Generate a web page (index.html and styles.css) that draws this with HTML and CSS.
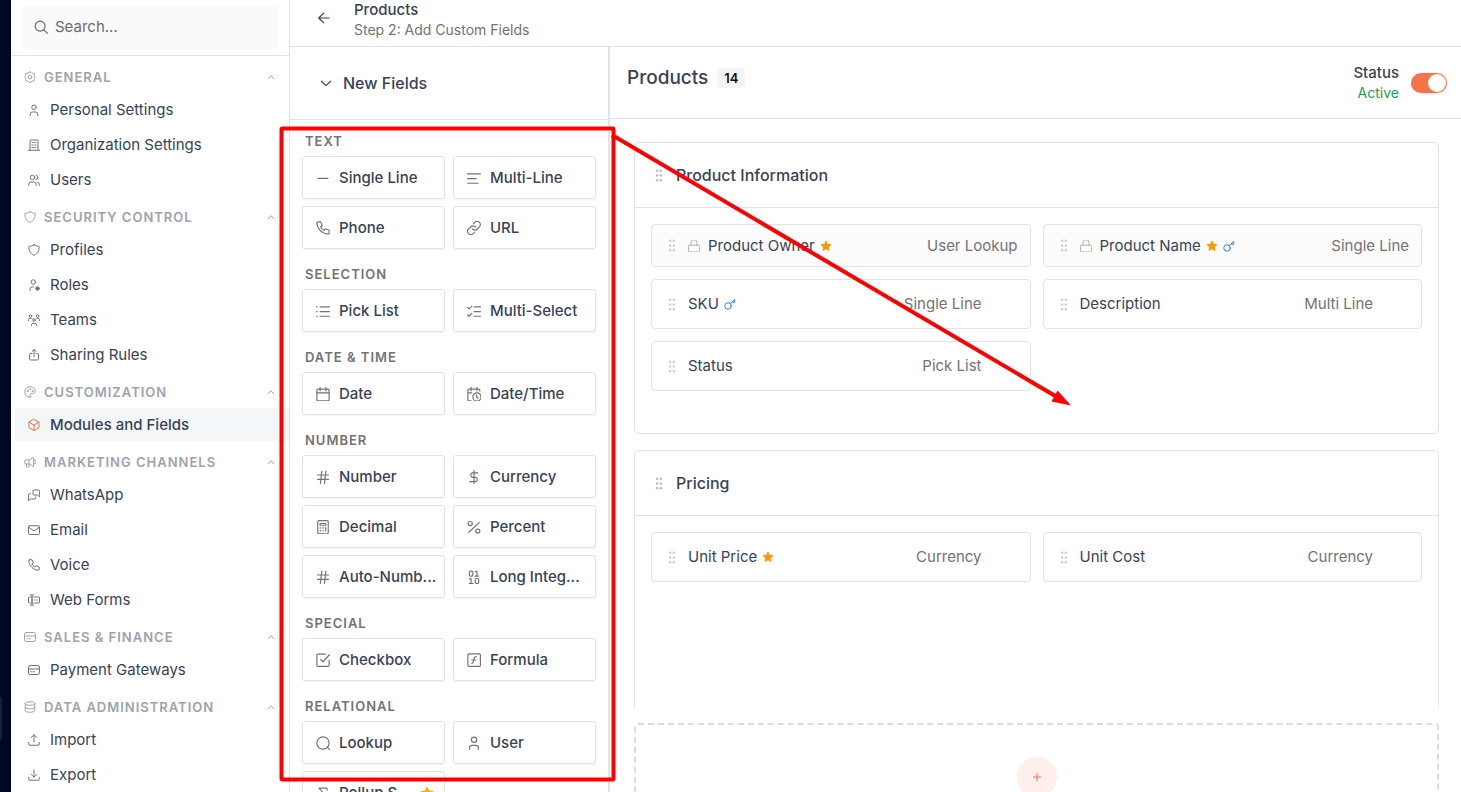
FILE: index.html
```html
<!DOCTYPE html>
<html lang="en">
<head>
<meta charset="utf-8">
<meta name="viewport" content="width=device-width, initial-scale=1">
<title>Products - Add Custom Fields</title>
<link rel="stylesheet" href="styles.css">
</head>
<body>
<svg class="sprite" aria-hidden="true">
  <symbol id="search" viewBox="0 0 24 24"><circle cx="10.5" cy="10.5" r="8.500"/><path d="M16.800 16.800 23 23"/></symbol>
  <symbol id="gear" viewBox="0 0 24 24"><path d="M9.500 3.200a2.700 2.700 0 0 1 5 0 2.700 2.700 0 0 0 3.200 1.300 2.700 2.700 0 0 1 3 3.300 2.700 2.700 0 0 0 .6 2.600 2.700 2.700 0 0 1 0 3.800 2.700 2.700 0 0 0-.6 2.600 2.700 2.700 0 0 1-3 3.300 2.700 2.700 0 0 0-3.200 1.300 2.700 2.700 0 0 1-5 0 2.700 2.700 0 0 0-3.200-1.300 2.700 2.700 0 0 1-3-3.300 2.700 2.700 0 0 0-.6-2.600 2.700 2.700 0 0 1 0-3.800 2.700 2.700 0 0 0 .6-2.600 2.700 2.700 0 0 1 3-3.300 2.700 2.700 0 0 0 3.200-1.300z"/><circle cx="12" cy="12.300" r="3.500"/></symbol>
  <symbol id="chev-up" viewBox="0 0 24 24"><path d="m4 17 8-9 8 9"/></symbol>
  <symbol id="chev-down" viewBox="0 0 24 24"><path d="m4 9 8 7.500L20 9"/></symbol>
  <symbol id="user" viewBox="0 0 24 24"><circle cx="12" cy="6.500" r="4.500"/><path d="M4.500 23v-2.500a4.500 4.500 0 0 1 4.500-4.500h6a4.500 4.500 0 0 1 4.500 4.500V23"/></symbol>
  <symbol id="building" viewBox="0 0 24 24"><path d="M1 22.500h22M4 22V3.500A1.500 1.500 0 0 1 5.500 2h13A1.500 1.500 0 0 1 20 3.500V22"/><path d="M8 7h1M11.500 7h1M15 7h1M8 12h1M11.500 12h1M15 12h1M8 17h1M11.500 17h1M15 17h1"/></symbol>
  <symbol id="users" viewBox="0 0 24 24"><circle cx="9" cy="7" r="4.500"/><path d="M1.500 23v-2.500A4.500 4.500 0 0 1 6 16h6a4.500 4.500 0 0 1 4.500 4.500V23M16 2.500a4.600 4.600 0 0 1 0 9M22.500 23v-2.500a4.500 4.500 0 0 0-3.500-4.300"/></symbol>
  <symbol id="shield" viewBox="0 0 24 24"><path d="M12 1.500c3 2.300 6 3.200 10 3C23 13 19.500 20 12 22.500 4.500 20 1 13 2 4.500c4 .2 7-.7 10-3z"/></symbol>
  <symbol id="role" viewBox="0 0 24 24"><circle cx="10.500" cy="6" r="4.500"/><path d="M4 23v-2.500A4.500 4.500 0 0 1 8.500 16h2"/><circle cx="19" cy="19" r="3.500" fill="currentColor"/></symbol>
  <symbol id="teams" viewBox="0 0 24 24"><circle cx="12" cy="12" r="2.600"/><path d="M7 23v-1.500a3 3 0 0 1 3-3h4a3 3 0 0 1 3 3V23"/><circle cx="5" cy="4" r="2.600"/><circle cx="19" cy="4" r="2.600"/><path d="M1 13v-1.500a3 3 0 0 1 3-3h2.500M23 13v-1.500a3 3 0 0 0-3-3h-2.500"/></symbol>
  <symbol id="share" viewBox="0 0 24 24"><path d="M8 9H5.500A2.500 2.500 0 0 0 3 11.500v8A2.500 2.500 0 0 0 5.500 22h13a2.500 2.500 0 0 0 2.500-2.500v-8A2.500 2.500 0 0 0 18.500 9H16M12 15V1M8 5l4-4 4 4"/></symbol>
  <symbol id="palette" viewBox="0 0 24 24"><path d="M12 22.500C6 22.500 1.500 17.800 1.500 12S6 1.500 12 1.500 22.500 5.500 22.500 10c0 3-2.500 5-5.500 5h-2.500a2 2 0 0 0-1.200 3.600c1 1.300.6 3.900-1.300 3.900z"/><circle cx="7" cy="10" r="1.200"/><circle cx="12" cy="6.500" r="1.200"/><circle cx="17" cy="10" r="1.200"/></symbol>
  <symbol id="cube" viewBox="0 0 24 24"><path d="m12 1 10 5.500v11L12 23 2 17.500v-11zM12 12l10-5.500M12 12v11M12 12 2 6.500"/></symbol>
  <symbol id="horn" viewBox="0 0 24 24"><path d="M20 8a4 4 0 0 1 0 8M10 7.500v13a2 2 0 0 1-2 2H7a2 2 0 0 1-2-2V16M12 7.500l5.500-4.700a1 1 0 0 1 1.700.8v16.800a1 1 0 0 1-1.700.8L12 16H3a1.500 1.500 0 0 1-1.500-1.500V9A1.500 1.500 0 0 1 3 7.500z"/></symbol>
  <symbol id="chat" viewBox="0 0 24 24"><path d="m23 15.500-4-3.500h-7.500A1.500 1.500 0 0 1 10 10.500v-7A1.500 1.500 0 0 1 11.500 2h10A1.500 1.500 0 0 1 23 3.500zM15.500 16v2.500A1.500 1.500 0 0 1 14 20H5l-4 3.500V11a1.500 1.500 0 0 1 1.500-1.500h3"/></symbol>
  <symbol id="mail" viewBox="0 0 24 24"><rect x="1" y="3.500" width="22" height="17.500" rx="2"/><path d="m1.500 6.500 10.500 7.500 10.500-7.500"/></symbol>
  <symbol id="phone" viewBox="0 0 24 24"><path d="M3.500 1.500H8l2.800 6.500-3 2a13 13 0 0 0 6.200 6.200l2-3 6.500 2.800v4.500a2 2 0 0 1-2 2C10.500 22 2 13.500 1.500 3.500a2 2 0 0 1 2-2z"/></symbol>
  <symbol id="form" viewBox="0 0 24 24"><path d="M11 1a3 3 0 0 0-3 3v16a3 3 0 0 0 3 3M5 1a3 3 0 0 1 3 3v16a3 3 0 0 1-3 3M12 6h9.500A1.500 1.500 0 0 1 23 7.500v9a1.500 1.500 0 0 1-1.500 1.500H12M4.500 6h-2A1.500 1.500 0 0 0 1 7.500v9A1.500 1.500 0 0 0 2.500 18h2M13 12h1M18 12h1"/></symbol>
  <symbol id="card" viewBox="0 0 24 24"><rect x="1" y="3" width="22" height="18" rx="3.500"/><path d="M1 10h22M6 15.500h1M10 15.500h3"/></symbol>
  <symbol id="database" viewBox="0 0 24 24"><ellipse cx="12" cy="5" rx="9.500" ry="3.500"/><path d="M2.500 5v7c0 2 4.200 3.500 9.500 3.500s9.500-1.500 9.500-3.500V5M2.500 12v7c0 2 4.200 3.500 9.500 3.500s9.500-1.500 9.500-3.500v-7"/></symbol>
  <symbol id="upload" viewBox="0 0 24 24"><path d="M1.500 17v3A2.500 2.500 0 0 0 4 22.500h16a2.500 2.500 0 0 0 2.500-2.500v-3M6.500 7 12 1.500 17.500 7M12 1.500V16"/></symbol>
  <symbol id="download" viewBox="0 0 24 24"><path d="M1.500 17v3A2.500 2.500 0 0 0 4 22.500h16a2.500 2.500 0 0 0 2.500-2.500v-3M6.500 11 12 16.500 17.500 11M12 2v14"/></symbol>
  <symbol id="back" viewBox="0 0 24 24"><path d="M3 12h18M11.500 3.500 3 12l8.500 8.500"/></symbol>
  <symbol id="line" viewBox="0 0 24 24"><path d="M3.500 12.500h17"/></symbol>
  <symbol id="lines" viewBox="0 0 24 24"><path d="M1 5h22M1 13h15M1 21h18"/></symbol>
  <symbol id="link" viewBox="0 0 24 24"><path d="M9 13.500a5.500 5.500 0 0 0 8.300.6l4-4a5.500 5.500 0 0 0-7.800-7.800l-2 2M15 10.500a5.500 5.500 0 0 0-8.300-.6l-4 4a5.500 5.500 0 0 0 7.800 7.800l2-2"/></symbol>
  <symbol id="list" viewBox="0 0 24 24"><path d="M7 5h16M7 13h16M7 21h16M1 5h1M1 13h1M1 21h1"/></symbol>
  <symbol id="checks" viewBox="0 0 24 24"><path d="m1 6 2.500 2.500 5-5M1 18.500 3.500 21l5-5M12 5h11M12 13h11M12 21h11"/></symbol>
  <symbol id="calendar" viewBox="0 0 24 24"><rect x="1.500" y="3.500" width="21" height="20" rx="2"/><path d="M1.500 10h21M7 .5v6M17 .5v6"/></symbol>
  <symbol id="calclock" viewBox="0 0 24 24"><path d="M22 7V5.500a2 2 0 0 0-2-2H3.500a2 2 0 0 0-2 2v16a2 2 0 0 0 2 2H7M1.500 10H8M7 .5v6M17 .5v6"/><circle cx="17" cy="17" r="7"/><path d="M16.500 13.500v4l2.500 1.500"/></symbol>
  <symbol id="hash" viewBox="0 0 24 24"><path d="M2.500 8.500h19M2.500 16h19M10 2 7.500 23M17 2l-2.500 21"/></symbol>
  <symbol id="dollar" viewBox="0 0 24 24"><path d="M12 1v22M18.500 5H9a4 4 0 0 0 0 7.500h6a4 4 0 0 1 0 7.500H4.500"/></symbol>
  <symbol id="calc" viewBox="0 0 24 24"><rect x="3" y="1" width="18" height="22.500" rx="2"/><path d="M7 6h10v3H7zM7 13.500h1M11.500 13.500h1M16 13.500h1M7 18.500h1M11.500 18.500h1M16.500 13.500v5"/></symbol>
  <symbol id="percent" viewBox="0 0 24 24"><circle cx="5.500" cy="6" r="3.500"/><circle cx="18.500" cy="19" r="3.500"/><path d="M21 4 3 21"/></symbol>
  <symbol id="binary" viewBox="0 0 24 24"><rect x="4" y="2" width="6" height="8.500" rx="2"/><rect x="14" y="14.500" width="6" height="8.500" rx="2"/><path d="M14 10.500h6M17 10.500V2l-3 1M4 23h6M7 23v-8.500l-3 1"/></symbol>
  <symbol id="checkbox" viewBox="0 0 24 24"><path d="m8 11 4 4L23 3M22.500 12v9a2 2 0 0 1-2 2h-17a2 2 0 0 1-2-2V4a2 2 0 0 1 2-2H16"/></symbol>
  <symbol id="formula" viewBox="0 0 24 24"><rect x="1.500" y="1.500" width="21.500" height="21.500" rx="2"/><path d="M8 18c3 0 3-2 3.500-6S12.500 6 16 6M8 12h7"/></symbol>
  <symbol id="lookup" viewBox="0 0 24 24"><circle cx="12" cy="12" r="10.500"/><path d="m19.500 19.500 3.500 3.500"/></symbol>
  <symbol id="sigma" viewBox="0 0 24 24"><path d="M19 7V3.500H5l8 9-8 9h14V18"/></symbol>
  <symbol id="grip" viewBox="0 0 8 14"><g fill="currentColor" stroke="none"><circle cx="2" cy="2" r="1.400"/><circle cx="6" cy="2" r="1.400"/><circle cx="2" cy="7" r="1.400"/><circle cx="6" cy="7" r="1.400"/><circle cx="2" cy="12" r="1.400"/><circle cx="6" cy="12" r="1.400"/></g></symbol>
  <symbol id="lock" viewBox="0 0 24 24"><rect x="1" y="10.500" width="22.500" height="13.500" rx="2"/><path d="M6 10.500V5.500a6 6 0 0 1 12 0v5"/></symbol>
  <symbol id="star" viewBox="0 0 24 24"><path fill="currentColor" d="m12 2.500 3 6 6.700.9-4.900 4.700 1.200 6.700-6-3.200-6 3.200 1.200-6.700-4.900-4.700 6.700-.9z"/></symbol>
  <symbol id="key" viewBox="0 0 24 24"><circle cx="8" cy="16" r="6.500"/><path d="m12.500 11.500 9-8.500v5.500l-4 .5V6.500"/></symbol>
  <symbol id="plus" viewBox="0 0 24 24"><path d="M12 1v22M1 12h22"/></symbol>
</svg>

<div class="app">
  <div class="rail"><span class="rail-active"></span></div>

  <aside class="sidebar">
    <div class="search-wrap">
      <label class="search"><svg class="ic ic-14"><use href="#search"/></svg><input type="text" placeholder="Search..." aria-label="Search settings"></label>
    </div>
    <nav class="nav">
      <section class="nav-group">
        <button class="nav-head"><svg class="ic ic-12"><use href="#gear"/></svg><span>General</span><svg class="ic ic-8"><use href="#chev-up"/></svg></button>
        <a class="nav-item" href="#"><svg class="ic ic-12"><use href="#user"/></svg>Personal Settings</a>
        <a class="nav-item" href="#"><svg class="ic ic-12"><use href="#building"/></svg>Organization Settings</a>
        <a class="nav-item" href="#"><svg class="ic ic-12"><use href="#users"/></svg>Users</a>
      </section>
      <section class="nav-group">
        <button class="nav-head"><svg class="ic ic-12"><use href="#shield"/></svg><span>Security Control</span><svg class="ic ic-8"><use href="#chev-up"/></svg></button>
        <a class="nav-item" href="#"><svg class="ic ic-12"><use href="#shield"/></svg>Profiles</a>
        <a class="nav-item" href="#"><svg class="ic ic-12"><use href="#role"/></svg>Roles</a>
        <a class="nav-item" href="#"><svg class="ic ic-12"><use href="#teams"/></svg>Teams</a>
        <a class="nav-item" href="#"><svg class="ic ic-12"><use href="#share"/></svg>Sharing Rules</a>
      </section>
      <section class="nav-group">
        <button class="nav-head"><svg class="ic ic-12"><use href="#palette"/></svg><span>Customization</span><svg class="ic ic-8"><use href="#chev-up"/></svg></button>
        <a class="nav-item active" href="#" aria-current="page"><svg class="ic ic-12"><use href="#cube"/></svg>Modules and Fields</a>
      </section>
      <section class="nav-group">
        <button class="nav-head"><svg class="ic ic-12"><use href="#horn"/></svg><span>Marketing Channels</span><svg class="ic ic-8"><use href="#chev-up"/></svg></button>
        <a class="nav-item" href="#"><svg class="ic ic-12"><use href="#chat"/></svg>WhatsApp</a>
        <a class="nav-item" href="#"><svg class="ic ic-12"><use href="#mail"/></svg>Email</a>
        <a class="nav-item" href="#"><svg class="ic ic-12"><use href="#phone"/></svg>Voice</a>
        <a class="nav-item" href="#"><svg class="ic ic-12"><use href="#form"/></svg>Web Forms</a>
      </section>
      <section class="nav-group">
        <button class="nav-head"><svg class="ic ic-12"><use href="#card"/></svg><span>Sales &amp; Finance</span><svg class="ic ic-8"><use href="#chev-up"/></svg></button>
        <a class="nav-item" href="#"><svg class="ic ic-12"><use href="#card"/></svg>Payment Gateways</a>
      </section>
      <section class="nav-group">
        <button class="nav-head"><svg class="ic ic-12"><use href="#database"/></svg><span>Data Administration</span><svg class="ic ic-8"><use href="#chev-up"/></svg></button>
        <a class="nav-item" href="#"><svg class="ic ic-12"><use href="#upload"/></svg>Import</a>
        <a class="nav-item" href="#"><svg class="ic ic-12"><use href="#download"/></svg>Export</a>
      </section>
    </nav>
  </aside>

  <div class="content">
    <header class="topbar">
      <button class="back" aria-label="Back"><svg class="ic ic-14"><use href="#back"/></svg></button>
      <div class="crumb"><strong>Products</strong><span>Step 2: Add Custom Fields</span></div>
    </header>

    <div class="workspace">
      <aside class="fields">
        <button class="fields-head"><svg class="ic ic-14"><use href="#chev-down"/></svg>New Fields</button>
        <div class="fields-body">
          <section class="field-group">
            <h3>Text</h3>
            <div class="tiles">
              <button class="tile"><svg class="ic ic-14"><use href="#line"/></svg><span>Single Line</span></button>
              <button class="tile"><svg class="ic ic-14"><use href="#lines"/></svg><span>Multi-Line</span></button>
              <button class="tile"><svg class="ic ic-14"><use href="#phone"/></svg><span>Phone</span></button>
              <button class="tile"><svg class="ic ic-14"><use href="#link"/></svg><span>URL</span></button>
            </div>
          </section>
          <section class="field-group">
            <h3>Selection</h3>
            <div class="tiles">
              <button class="tile"><svg class="ic ic-14"><use href="#list"/></svg><span>Pick List</span></button>
              <button class="tile"><svg class="ic ic-14"><use href="#checks"/></svg><span>Multi-Select</span></button>
            </div>
          </section>
          <section class="field-group">
            <h3>Date &amp; Time</h3>
            <div class="tiles">
              <button class="tile"><svg class="ic ic-14"><use href="#calendar"/></svg><span>Date</span></button>
              <button class="tile"><svg class="ic ic-14"><use href="#calclock"/></svg><span>Date/Time</span></button>
            </div>
          </section>
          <section class="field-group">
            <h3>Number</h3>
            <div class="tiles">
              <button class="tile"><svg class="ic ic-14"><use href="#hash"/></svg><span>Number</span></button>
              <button class="tile"><svg class="ic ic-14"><use href="#dollar"/></svg><span>Currency</span></button>
              <button class="tile"><svg class="ic ic-14"><use href="#calc"/></svg><span>Decimal</span></button>
              <button class="tile"><svg class="ic ic-14"><use href="#percent"/></svg><span>Percent</span></button>
              <button class="tile"><svg class="ic ic-14"><use href="#hash"/></svg><span>Auto-Numb...</span></button>
              <button class="tile"><svg class="ic ic-14"><use href="#binary"/></svg><span>Long Integ...</span></button>
            </div>
          </section>
          <section class="field-group">
            <h3>Special</h3>
            <div class="tiles">
              <button class="tile"><svg class="ic ic-14"><use href="#checkbox"/></svg><span>Checkbox</span></button>
              <button class="tile"><svg class="ic ic-14"><use href="#formula"/></svg><span>Formula</span></button>
            </div>
          </section>
          <section class="field-group">
            <h3>Relational</h3>
            <div class="tiles">
              <button class="tile"><svg class="ic ic-14"><use href="#lookup"/></svg><span>Lookup</span></button>
              <button class="tile"><svg class="ic ic-14"><use href="#user"/></svg><span>User</span></button>
              <button class="tile"><svg class="ic ic-14"><use href="#sigma"/></svg><span>Rollup S...</span><svg class="ic ic-14 premium"><use href="#star"/></svg></button>
            </div>
          </section>
        </div>
      </aside>

      <main class="builder">
        <div class="builder-head">
          <div class="title"><h1>Products</h1><span class="count">14</span></div>
          <div class="status">
            <label for="active">Status<span>Active</span></label>
            <input class="switch" id="active" type="checkbox" role="switch" checked>
          </div>
        </div>

        <div class="canvas">
          <section class="card">
            <h2><svg class="grip"><use href="#grip"/></svg>Product Information</h2>
            <div class="rows">
              <div class="row locked"><svg class="grip"><use href="#grip"/></svg><svg class="ic ic-12 lock"><use href="#lock"/></svg><span class="name">Product Owner</span><svg class="ic ic-12 star"><use href="#star"/></svg><span class="type">User Lookup</span></div>
              <div class="row locked"><svg class="grip"><use href="#grip"/></svg><svg class="ic ic-12 lock"><use href="#lock"/></svg><span class="name">Product Name</span><svg class="ic ic-12 star"><use href="#star"/></svg><svg class="ic ic-12 key"><use href="#key"/></svg><span class="type">Single Line</span></div>
              <div class="row"><svg class="grip"><use href="#grip"/></svg><span class="name">SKU</span><svg class="ic ic-12 key"><use href="#key"/></svg><span class="type">Single Line</span></div>
              <div class="row"><svg class="grip"><use href="#grip"/></svg><span class="name">Description</span><span class="type">Multi Line</span></div>
              <div class="row"><svg class="grip"><use href="#grip"/></svg><span class="name">Status</span><span class="type">Pick List</span></div>
            </div>
          </section>
          <section class="card">
            <h2><svg class="grip"><use href="#grip"/></svg>Pricing</h2>
            <div class="rows">
              <div class="row"><svg class="grip"><use href="#grip"/></svg><span class="name">Unit Price</span><svg class="ic ic-12 star"><use href="#star"/></svg><span class="type">Currency</span></div>
              <div class="row"><svg class="grip"><use href="#grip"/></svg><span class="name">Unit Cost</span><span class="type">Currency</span></div>
            </div>
          </section>
        </div>
        <div class="add-zone">
          <div class="add-box"><button class="add" aria-label="Add section"><svg class="ic ic-8"><use href="#plus"/></svg></button></div>
        </div>
      </main>
    </div>
  </div>
</div>

<svg class="callout" width="1080" height="792" aria-hidden="true">
  <rect x="281.500" y="128.500" width="332" height="651" rx="1"/>
  <path d="M612 135 1057 397"/>
  <path class="tip" d="M1071 405.500 1057.500 390.500 1051.500 401.500z"/>
</svg>
</body>
</html>
```
FILE: styles.css
```css
* { box-sizing: border-box; }

body {
  margin: 0;
  overflow: hidden;
  background: #fff;
  color: #374357;
  font-family: Inter, "Noto Sans", sans-serif;
  font-size: 15px;
  line-height: 20px;
}

button, input { font: inherit; color: inherit; }
button { background: none; border: 0; padding: 0; text-align: left; cursor: pointer; }
h1, h2, h3 { margin: 0; font-weight: 500; }

.sprite { display: none; }

.ic {
  flex: none;
  fill: none;
  stroke: currentColor;
  stroke-width: 2;
  stroke-linecap: round;
  stroke-linejoin: round;
  overflow: visible;
}
.ic-8 { width: 8px; height: 8px; stroke-width: 3; }
.ic-12 { width: 12px; height: 12px; }
.ic-14 { width: 14px; height: 14px; }

.app { display: flex; height: 100vh; }

.rail { flex: none; width: 11px; background: #020824; display: flex; flex-direction: column; justify-content: flex-end; }
.rail-active { width: 2px; height: 44px; margin-bottom: 51px; background: #151d3b; border-radius: 0 4px 4px 0; }

.sidebar { flex: none; width: 279px; border-right: 1px solid #e3e3e6; }
.search-wrap { padding: 6px 11px 7px; border-bottom: 1px solid #e1e3e6; }
.search {
  display: flex;
  align-items: center;
  gap: 7px;
  height: 42px;
  padding: 0 12px;
  background: #f9fafc;
  border-radius: 5px;
  box-shadow: 0 1px 2px #0000000a;
  color: #666;
}
.search input { flex: 1; min-width: 0; border: 0; padding: 0; background: none; outline: 0; }
.search input::placeholder { color: #6b6b6b; opacity: 1; }

.nav { display: flex; flex-direction: column; gap: 10px; padding: 10px 0 0 4px; }
.nav-group { display: flex; flex-direction: column; gap: 2px; }
.nav-head {
  display: flex;
  align-items: center;
  gap: 8px;
  height: 21px;
  margin-bottom: 4px;
  padding: 0 14px 0 9px;
  color: #9ca3af;
  font-size: 13px;
  font-weight: 600;
  letter-spacing: 1px;
  text-transform: uppercase;
}
.nav-head span { flex: 1; }
.nav-item {
  display: flex;
  align-items: center;
  gap: 10px;
  height: 33px;
  padding: 0 13px;
  border-radius: 4px 0 0 4px;
  color: inherit;
  text-decoration: none;
}
.nav-item .ic { color: #6b7280; }
.nav-item.active { background: #f3f7fa; font-weight: 500; }
.nav-item.active .ic { color: #f47149; }

.content { flex: 1; min-width: 0; display: flex; flex-direction: column; }
.topbar { display: flex; gap: 23px; height: 47px; padding: 0 27px; border-bottom: 1px solid #e3e3e3; }
.back { height: 36px; display: flex; align-items: center; }
.crumb { display: flex; flex-direction: column; }
.crumb strong { font-weight: 500; }
.crumb span { color: #737373; font-size: 14px; }

.workspace { flex: 1; min-height: 0; display: flex; }
.fields { flex: none; width: 320px; border-right: 2px solid #e3e3e6; overflow: hidden; }
.fields-head {
  display: flex;
  align-items: center;
  gap: 10px;
  width: 100%;
  height: 73px;
  padding: 0 29px;
  border-bottom: 1px solid #e3e3e6;
  font-size: 16px;
  font-weight: 500;
}
.fields-body { display: flex; flex-direction: column; gap: 17px; padding: 13px 12px 0; }
.field-group { display: flex; flex-direction: column; gap: 7px; }
.field-group h3 {
  padding-left: 3px;
  color: #737373;
  font-size: 13px;
  font-weight: 600;
  line-height: 16px;
  letter-spacing: 1px;
  text-transform: uppercase;
}
.tiles { display: grid; grid-template-columns: repeat(2, minmax(0, 1fr)); gap: 7px 8px; }
.tile {
  display: flex;
  align-items: center;
  gap: 9px;
  height: 43px;
  padding: 0 8px 0 13px;
  border: 1px solid #e3e3e3;
  border-radius: 3px;
  box-shadow: 0 1px 2px #0000000d;
  font-weight: 500;
  white-space: nowrap;
}
.tile .ic { color: #737373; }
.tile .premium { color: #f5b301; margin: 0 5px 0 auto; }

.builder { flex: 1; min-width: 0; display: flex; flex-direction: column; }
.builder-head {
  flex: none;
  display: flex;
  justify-content: space-between;
  height: 72px;
  padding: 16px 14px 0 17px;
  border-bottom: 1px solid #e3e3e3;
}
.title { display: flex; align-items: center; gap: 9px; height: 30px; }
.title h1 { font-size: 19px; }
.count { padding: 0 7px; border-radius: 4px; background: #f4f4f4; color: #111; font-size: 13px; font-weight: 600; }
.status { display: flex; align-items: center; gap: 12px; height: 40px; text-align: right; }
.status label { font-weight: 500; }
.status label span { display: block; color: #16a34a; font-size: 14px; font-weight: 400; }
.switch {
  appearance: none;
  display: flex;
  justify-content: flex-end;
  width: 36px;
  height: 20px;
  margin: 0;
  padding: 1px;
  border-radius: 10px;
  background: #f47349;
  box-shadow: 0 1px 2px #0000001a;
}
.switch::before { content: ""; width: 18px; height: 18px; border-radius: 50%; background: #fff; }
.switch:not(:checked) { justify-content: flex-start; background: #ccc; }

.canvas { flex: 1; min-height: 0; overflow: hidden; display: flex; flex-direction: column; gap: 16px; padding: 23px 22px 0 24px; }
.card { flex: none; min-height: 292px; border: 1px solid #e3e3e3; border-radius: 5px; }
.card h2 { display: flex; align-items: center; gap: 13px; height: 65px; padding: 0 20px; border-bottom: 1px solid #e3e3e3; font-size: 16px; }
.grip { flex: none; width: 8px; height: 13px; color: #bfbfbf; }
.rows { display: grid; grid-template-columns: repeat(2, minmax(0, 1fr)); gap: 12px; padding: 16px; }
.row {
  display: flex;
  align-items: center;
  gap: 5px;
  height: 50px;
  padding: 0 48px 0 16px;
  border: 1px solid #e3e3e3;
  border-radius: 4px;
}
.row .grip { color: #d0d0d0; margin-right: 7px; }
.row.locked { height: 43px; padding-right: 12px; background: #fcfcfc; }
.type { margin-left: auto; color: #737373; }
.lock { color: #b3b3b3; margin-right: 3px; }
.star { color: #ff9800; }
.key { color: #3b82f6; }

.add-zone { flex: none; height: 85px; padding: 16px 22px 0 24px; overflow: hidden; }
.add-box { display: flex; justify-content: center; height: 120px; padding-top: 32px; border: 2px dashed #dcdcdc; border-radius: 4px; }
.add { display: grid; place-items: center; width: 40px; height: 40px; border-radius: 50%; background: #feefec; color: #f47149; }

.callout { position: absolute; top: 0; left: 0; fill: none; stroke: #f00; stroke-width: 4; pointer-events: none; }
.callout .tip { fill: #f00; stroke: none; }
```
